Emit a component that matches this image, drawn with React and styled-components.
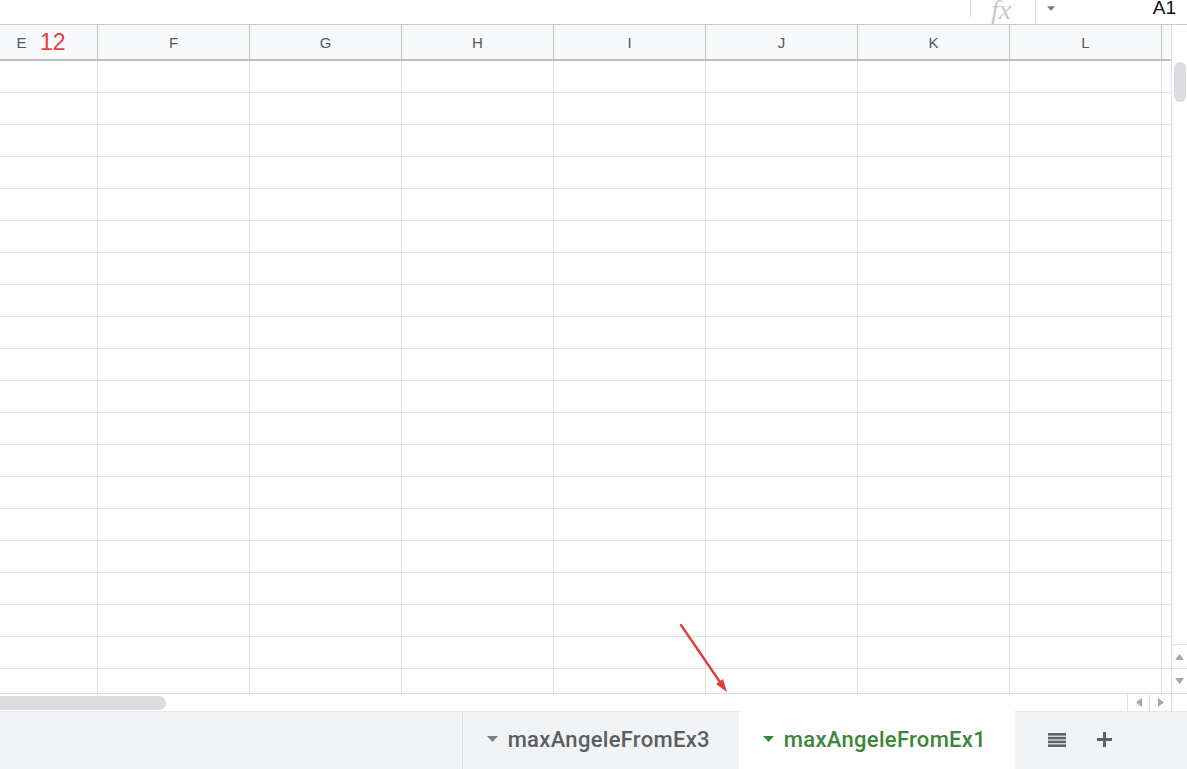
import React from "react";
import styled, { createGlobalStyle } from "styled-components";

const Global = createGlobalStyle`
  html, body { margin: 0; padding: 0; background: #fff; overflow: hidden; }
  * { box-sizing: border-box; }
`;

const COLS = "152px repeat(7, 152px) 10px";
const GRID = "#dfe0e1";
const HEAD_LINE = "#c0c0c0";

const Page = styled.div`
  position: relative;
  width: 1187px;
  height: 769px;
  display: flex;
  flex-direction: column;
  overflow: hidden;
  background: #fff;
  font-family: "Liberation Sans", Arial, sans-serif;
`;

const TopBar = styled.div`
  height: 25px;
  flex: none;
  display: flex;
  justify-content: flex-end;
  border-bottom: 1px solid #c7c7c7;
`;

const FormulaGroup = styled.div`
  width: 217px;
  display: flex;
  align-items: flex-start;
`;

const Divider = styled.div`
  width: 1px;
  height: ${(p) => p.$h}px;
  background: #d3d3d3;
  flex: none;
`;

const FxBox = styled.div`
  width: 64px;
  height: 20px;
  display: flex;
  justify-content: center;
  align-items: flex-end;
  font-family: "Liberation Serif", "Times New Roman", serif;
  font-style: italic;
  font-size: 28px;
  line-height: 20px;
  color: #c9c9c9;
  padding-right: 4px;
  overflow: visible;
`;

const CaretBox = styled.div`
  width: 30px;
  height: 16px;
  display: flex;
  justify-content: center;
  align-items: center;
`;

const CellRef = styled.div`
  flex: 1;
  text-align: right;
  padding-right: 11px;
  font-size: 19px;
  line-height: 19px;
  margin-top: -2px;
  color: #111;
`;

const Main = styled.div`
  flex: 1;
  min-height: 0;
  display: flex;
`;

const Sheet = styled.div`
  width: 1171px;
  flex: none;
  overflow: hidden;
  display: flex;
  flex-direction: column;
`;

const HeaderRow = styled.div`
  display: grid;
  grid-template-columns: ${COLS};
  margin-left: -54px;
  height: 36px;
  flex: none;
  background: #f8f9fa;
  border-bottom: 2px solid ${HEAD_LINE};
`;

const HeaderCell = styled.div`
  display: flex;
  align-items: center;
  justify-content: center;
  border-right: 1px solid ${(p) => (p.$gutter ? "#d6d6d6" : HEAD_LINE)};
  font-size: 15px;
  color: #54585d;
  padding-top: 1px;
`;

const Body = styled.div`
  flex: 1;
  min-height: 0;
  overflow: hidden;
  margin-left: -54px;
`;

const Row = styled.div`
  display: grid;
  grid-template-columns: ${COLS};
  height: 32px;
`;

const Cell = styled.div`
  border-right: 1px solid ${GRID};
  border-bottom: 1px solid ${GRID};
`;

const VScroll = styled.div`
  width: 16px;
  flex: none;
  display: flex;
  flex-direction: column;
  border-left: 1px solid ${GRID};
  padding-top: 37px;
`;

const VThumb = styled.div`
  width: 12px;
  height: 40px;
  margin-left: 2px;
  border-radius: 6px;
  background: #dadce0;
`;

const Spacer = styled.div`
  flex: 1;
`;

const ArrowBtn = styled.div`
  width: ${(p) => p.$w || "auto"};
  height: ${(p) => p.$h || "auto"};
  display: flex;
  align-items: center;
  justify-content: center;
  border-top: ${(p) => (p.$top ? `1px solid ${GRID}` : "none")};
  border-left: ${(p) => (p.$left ? `1px solid ${GRID}` : "none")};
  flex: none;
`;

const HScrollRow = styled.div`
  height: 18px;
  flex: none;
  display: flex;
  align-items: stretch;
  border-top: 1px solid ${GRID};
`;

const HThumb = styled.div`
  width: 166px;
  height: 14px;
  margin-top: 2px;
  border-radius: 0 7px 7px 0;
  background: #dadce0;
`;

const Corner = styled.div`
  width: 16px;
  flex: none;
  border-left: 1px solid ${GRID};
`;

const TabBar = styled.div`
  height: 58px;
  flex: none;
  display: flex;
  justify-content: flex-end;
  background: #f1f3f4;
  border-top: 1px solid #e6e7e9;
`;

const Tab = styled.div`
  display: flex;
  align-items: center;
  gap: 10px;
  padding: 0 29px 0 24px;
  background: ${(p) => (p.$active ? "#fff" : "transparent")};
  border-left: ${(p) => (p.$active ? "none" : "1px solid #dfe1e4")};
  margin-top: -1px;
  font-family: Roboto, "Noto Sans", sans-serif;
  font-weight: 500;
  font-size: 22px;
  letter-spacing: 0.3px;
  color: ${(p) => (p.$active ? "#3a863a" : "#5a5e63")};
  padding-bottom: 2px;
`;

const Tools = styled.div`
  width: 172px;
  display: flex;
  align-items: center;
  gap: 31px;
  padding-left: 33px;
  padding-bottom: 2px;
`;

const Note = styled.div`
  position: absolute;
  left: 40px;
  top: 31px;
  font-size: 23px;
  color: #e8403a;
  line-height: 23px;
`;

const Overlay = styled.svg`
  position: absolute;
  left: 0;
  top: 0;
  pointer-events: none;
`;

const Caret = ({ color, w = 11, h = 6 }) => (
  <svg width={w} height={h} viewBox="0 0 11 6">
    <polygon points="0,0 11,0 5.5,6" fill={color} />
  </svg>
);

const Tri = ({ dir }) => {
  const pts = {
    up: "0,6 9,6 4.5,0",
    down: "0,0 9,0 4.5,6",
    left: "6,0 6,9 0,4.5",
    right: "0,0 0,9 6,4.5",
  }[dir];
  const vert = dir === "up" || dir === "down";
  return (
    <svg width={vert ? 9 : 6} height={vert ? 6 : 9} viewBox={vert ? "0 0 9 6" : "0 0 6 9"}>
      <polygon points={pts} fill="#a5a7aa" />
    </svg>
  );
};

const letters = ["E", "F", "G", "H", "I", "J", "K", "L"];

export default function App() {
  const rows = Array.from({ length: 20 });
  return (
    <Page>
      <Global />
      <TopBar>
        <FormulaGroup>
          <Divider $h={17} />
          <FxBox>fx</FxBox>
          <Divider $h={24} />
          <CaretBox>
            <Caret color="#777" w={8} h={5} />
          </CaretBox>
          <CellRef>A1</CellRef>
        </FormulaGroup>
      </TopBar>
      <Main>
        <Sheet>
          <HeaderRow>
            {letters.map((l) => (
              <HeaderCell key={l}>{l}</HeaderCell>
            ))}
            <HeaderCell $gutter />
          </HeaderRow>
          <Body>
            {rows.map((_, i) => (
              <Row key={i}>
                {letters.map((l) => (
                  <Cell key={l} />
                ))}
                <Cell />
              </Row>
            ))}
          </Body>
        </Sheet>
        <VScroll>
          <VThumb />
          <Spacer />
          <ArrowBtn $h="24px" $top>
            <Tri dir="up" />
          </ArrowBtn>
          <ArrowBtn $h="25px" $top>
            <Tri dir="down" />
          </ArrowBtn>
        </VScroll>
      </Main>
      <HScrollRow>
        <HThumb />
        <Spacer />
        <ArrowBtn $w="22px" $left>
          <Tri dir="left" />
        </ArrowBtn>
        <ArrowBtn $w="22px" $left>
          <Tri dir="right" />
        </ArrowBtn>
        <Corner />
      </HScrollRow>
      <TabBar>
        <Tab>
          <Caret color="#7a7e83" />
          maxAngeleFromEx3
        </Tab>
        <Tab $active>
          <Caret color="#3a863a" />
          maxAngeleFromEx1
        </Tab>
        <Tools>
          <svg width="18" height="14" viewBox="0 0 18 14">
            <rect x="0" y="0" width="18" height="2.6" fill="#5f6368" />
            <rect x="0" y="3.8" width="18" height="2.6" fill="#5f6368" />
            <rect x="0" y="7.6" width="18" height="2.6" fill="#5f6368" />
            <rect x="0" y="11.4" width="18" height="2.6" fill="#5f6368" />
          </svg>
          <svg width="15" height="15" viewBox="0 0 15 15">
            <rect x="6" y="0" width="3" height="15" fill="#5f6368" />
            <rect x="0" y="6" width="15" height="3" fill="#5f6368" />
          </svg>
        </Tools>
      </TabBar>
      <Note>12</Note>
      <Overlay width="1187" height="769" viewBox="0 0 1187 769">
        <line x1="681" y1="625" x2="722" y2="685" stroke="#e53b3b" strokeWidth="2.4" strokeLinecap="round" />
        <polygon points="727,692 716,684 723,679" fill="#e53b3b" />
      </Overlay>
    </Page>
  );
}
